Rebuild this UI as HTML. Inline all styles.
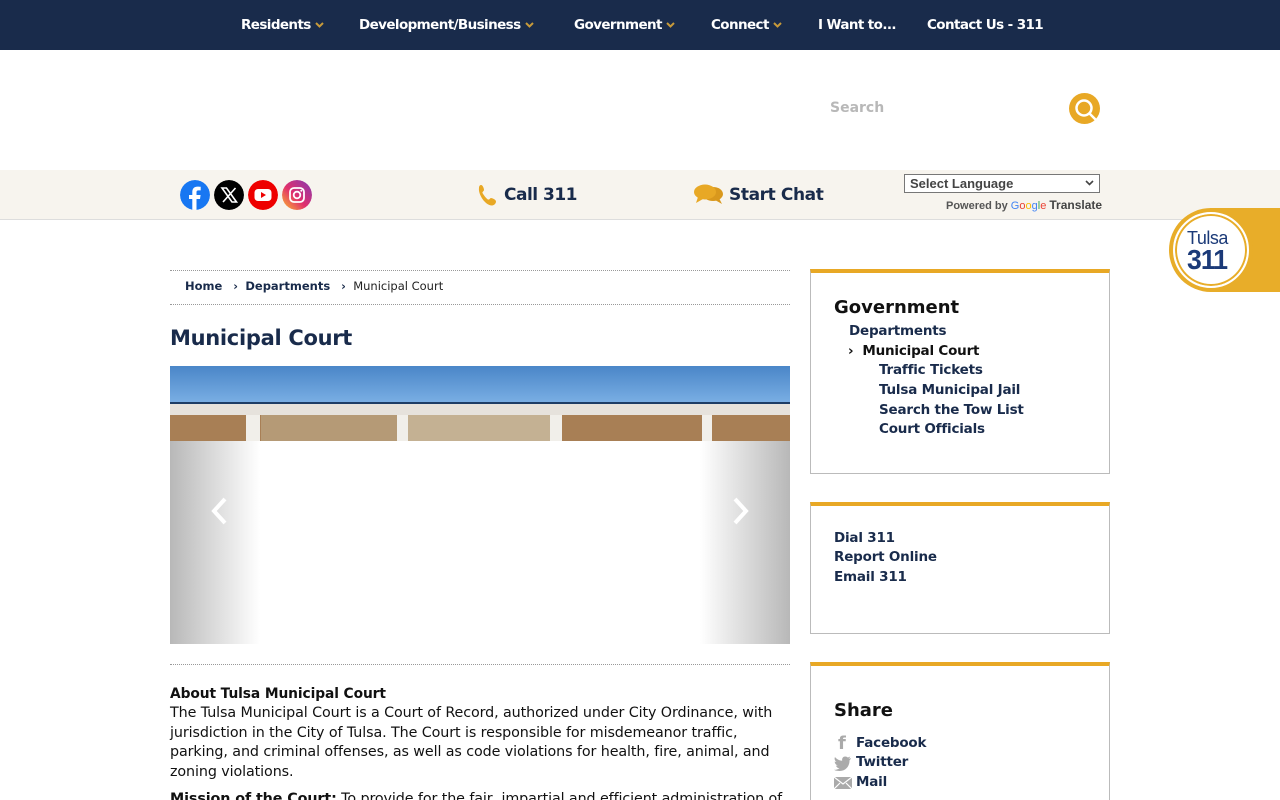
<!DOCTYPE html>
<html><head><meta charset="utf-8"><style>
*{margin:0;padding:0;box-sizing:border-box}
html,body{width:1280px;height:800px;overflow:hidden}
body{background:#fff;font-family:"DejaVu Sans","Liberation Sans",sans-serif;color:#111;position:relative}
.a{position:absolute;white-space:nowrap}
.nav{position:absolute;left:0;top:0;width:1280px;height:50px;background:#192b4b}
.nav span{position:absolute;top:17px;color:#fff;font-weight:bold;font-size:13.5px;letter-spacing:-0.6px}
.nav svg{margin-left:4px;vertical-align:1px}
.bar{position:absolute;left:0;top:170px;width:1280px;height:50px;background:#f7f4ee;border-bottom:1px solid #ddd}
.circ{position:absolute;top:180px;width:30px;height:30px;border-radius:50%}
.navy{color:#192b4b;font-weight:bold}
.box{position:absolute;left:810px;width:300px;border:1px solid #bbb;border-top:4px solid #e8a825}
.side{font-size:13.5px;font-weight:bold;color:#192b4b;letter-spacing:-0.2px}
.body{font-size:14.3px;line-height:19.7px;color:#111;letter-spacing:-0.1px}
</style></head><body>
<div class="nav">
<span style="left:241px">Residents<svg width="9" height="6"><path d="M1 1l3.5 3.5L8 1" stroke="#c79a3a" stroke-width="2" fill="none"/></svg></span>
<span style="left:359px">Development/Business<svg width="9" height="6"><path d="M1 1l3.5 3.5L8 1" stroke="#c79a3a" stroke-width="2" fill="none"/></svg></span>
<span style="left:574px">Government<svg width="9" height="6"><path d="M1 1l3.5 3.5L8 1" stroke="#c79a3a" stroke-width="2" fill="none"/></svg></span>
<span style="left:711px">Connect<svg width="9" height="6"><path d="M1 1l3.5 3.5L8 1" stroke="#c79a3a" stroke-width="2" fill="none"/></svg></span>
<span style="left:818px">I Want to...</span>
<span style="left:927px">Contact Us - 311</span>
</div>
<div class="a" style="left:830px;top:100px;font-size:14px;font-weight:bold;color:#b8b8b8">Search</div>
<svg class="a" style="left:1069px;top:93px" width="31" height="31" viewBox="0 0 31 31"><circle cx="15.5" cy="15.5" r="15.5" fill="#e8a825"/><circle cx="15" cy="15" r="7.5" fill="none" stroke="#fff" stroke-width="2.5"/><circle cx="15" cy="15" r="4" fill="#e8a825"/><path d="M20 20 L27 27" stroke="#fff" stroke-width="2.5"/></svg>
<div class="bar"></div>
<svg class="circ" style="left:180px" viewBox="0 0 30 30"><circle cx="15" cy="15" r="15" fill="#1877f2"/><path d="M16.5 30V19h3.5l.6-4h-4.1v-2.6c0-1.2.4-2 2-2h2.2V6.8c-.4 0-1.7-.2-3.2-.2-3.2 0-5.2 1.9-5.2 5.4V15H9v4h3.3v11z" fill="#fff"/></svg>
<svg class="circ" style="left:214px" viewBox="0 0 30 30"><circle cx="15" cy="15" r="15" fill="#000"/><path d="M8 8h4.5l10 14h-4.5zM21.5 8L9 22" stroke="#fff" stroke-width="1.6" fill="none"/></svg>
<svg class="circ" style="left:248px" viewBox="0 0 30 30"><circle cx="15" cy="15" r="15" fill="#e00"/><rect x="6.5" y="9" width="17" height="12" rx="3.5" fill="#fff"/><path d="M13 12v6l5-3z" fill="#e00"/></svg>
<svg class="circ" style="left:282px" viewBox="0 0 30 30"><defs><linearGradient id="ig" x1="0" y1="1" x2="1" y2="0"><stop offset="0" stop-color="#fdbb2d"/><stop offset=".45" stop-color="#e1306c"/><stop offset="1" stop-color="#833ab4"/></linearGradient></defs><circle cx="15" cy="15" r="15" fill="url(#ig)"/><rect x="8" y="8" width="14" height="14" rx="4" fill="none" stroke="#fff" stroke-width="1.8"/><circle cx="15" cy="15" r="3.3" fill="none" stroke="#fff" stroke-width="1.8"/><circle cx="19.3" cy="10.7" r="1" fill="#fff"/></svg>
<svg class="a" style="left:478px;top:184px" width="20" height="22" viewBox="0 0 20 22"><path d="M3 1c2 0 3 4 3 5s-2 2-1.5 3 4 6 5.5 6.5 2-1.5 3-1.5 5 1.5 5 3.5-2 4-4 4C7 21.5 0 10 1 4 1 2 2 1 3 1z" fill="#e8a825"/></svg>
<div class="a navy" style="left:504px;top:185px;font-size:17px;letter-spacing:-0.5px">Call 311</div>
<svg class="a" style="left:693px;top:184px" width="32" height="22" viewBox="0 0 32 22"><ellipse cx="20" cy="10" rx="10" ry="7" fill="#d9981d"/><path d="M26 14l3 6-7-4z" fill="#d9981d"/><ellipse cx="12" cy="8" rx="11" ry="7.5" fill="#e8a825"/><path d="M5 13l-2 6 7-4z" fill="#e8a825"/></svg>
<div class="a navy" style="left:729px;top:185px;font-size:17px;letter-spacing:-0.4px">Start Chat</div>
<div class="a" style="left:904px;top:174px;width:196px;height:19px;border:1px solid #777;background:#fff;font-family:'Liberation Sans',sans-serif;font-weight:bold;font-size:13px;color:#444;padding:1px 5px">Select Language<svg style="position:absolute;right:5px;top:5px" width="9" height="6"><path d="M1 1l3.5 3.5L8 1" stroke="#444" stroke-width="1.6" fill="none"/></svg></div>
<div class="a" style="left:946px;top:198px;font-family:'Liberation Sans',sans-serif;font-size:11px;color:#555;font-weight:bold">Powered by <span style="color:#4285f4;font-weight:normal">G</span><span style="color:#ea4335;font-weight:normal">o</span><span style="color:#fbbc05;font-weight:normal">o</span><span style="color:#4285f4;font-weight:normal">g</span><span style="color:#34a853;font-weight:normal">l</span><span style="color:#ea4335;font-weight:normal">e</span> <span style="font-size:12px;color:#444">Translate</span></div>
<div class="a" style="left:1210px;top:208px;width:70px;height:84px;background:#e8ad29"></div>
<div class="a" style="left:1169px;top:208px;width:84px;height:84px;border-radius:50%;background:#e8ad29"></div>
<div class="a" style="left:1173px;top:212px;width:76px;height:76px;border-radius:50%;background:#fff;border:2px solid #fff;box-shadow:inset 0 0 0 2px #e8ad29"></div>
<div class="a" style="left:1187px;top:228px;font-family:'Liberation Sans',sans-serif;font-size:18px;color:#1b3a78;letter-spacing:-0.5px">Tulsa</div>
<div class="a" style="left:1187px;top:244px;font-family:'Liberation Sans',sans-serif;font-size:28px;font-weight:bold;color:#1b3a78;letter-spacing:-1px;transform:scaleX(.95);transform-origin:left">311</div>

<div class="a" style="left:170px;top:270px;width:620px;border-top:1px dotted #999"></div>
<div class="a" style="left:170px;top:304px;width:620px;border-top:1px dotted #999"></div>
<div class="a" style="left:185px;top:279px;font-size:11.5px;color:#192b4b"><b>Home</b> &nbsp;&nbsp;<b>›</b>&nbsp; <b>Departments</b> &nbsp;&nbsp;<b>›</b>&nbsp; <span style="color:#222">Municipal Court</span></div>
<div class="a navy" style="left:170px;top:326px;font-size:21px;letter-spacing:-0.3px">Municipal Court</div>
<div class="a" style="left:170px;top:366px;width:620px;height:278px;background:#fff;overflow:hidden">
 <div style="position:absolute;left:0;top:0;width:620px;height:40px;background:linear-gradient(#4a86c8,#7eb2e6)"></div>
 <div style="position:absolute;left:0;top:36px;width:620px;height:2px;background:#1d3d66"></div>
 <div style="position:absolute;left:0;top:38px;width:620px;height:11px;background:#e6e2dc"></div>
 <div style="position:absolute;left:0;top:49px;width:620px;height:26px;background:#a87f55"></div>
 <div style="position:absolute;left:91px;top:49px;width:136px;height:26px;background:#b59a76"></div>
 <div style="position:absolute;left:238px;top:49px;width:142px;height:26px;background:#c4b193"></div>
 <div style="position:absolute;left:76px;top:49px;width:14px;height:26px;background:#f1efea"></div>
 <div style="position:absolute;left:227px;top:49px;width:11px;height:26px;background:#f1efea"></div>
 <div style="position:absolute;left:380px;top:49px;width:12px;height:26px;background:#f1efea"></div>
 <div style="position:absolute;left:532px;top:49px;width:10px;height:26px;background:#f1efea"></div>
 <div style="position:absolute;left:0;top:75px;width:90px;height:203px;background:linear-gradient(90deg,#b8b8b8,rgba(255,255,255,0))"></div>
 <div style="position:absolute;right:0;top:75px;width:90px;height:203px;background:linear-gradient(270deg,#b8b8b8,rgba(255,255,255,0))"></div>
 <svg style="position:absolute;left:38px;top:130px" width="22" height="30"><path d="M17 3L6 15l11 12" stroke="#fff" stroke-width="4" fill="none"/></svg>
 <svg style="position:absolute;left:560px;top:130px" width="22" height="30"><path d="M5 3l11 12-11 12" stroke="#fff" stroke-width="4" fill="none"/></svg>
</div>
<div class="a" style="left:170px;top:664px;width:620px;border-top:1px dotted #999"></div>
<div class="a body" style="left:170px;top:685px;font-weight:bold;font-size:13.8px">About Tulsa Municipal Court</div>
<div class="a body" style="left:170px;top:704px">The Tulsa Municipal Court is a Court of Record, authorized under City Ordinance, with</div>
<div class="a body" style="left:170px;top:724px">jurisdiction in the City of Tulsa. The Court is responsible for misdemeanor traffic,</div>
<div class="a body" style="left:170px;top:743px">parking, and criminal offenses, as well as code violations for health, fire, animal, and</div>
<div class="a body" style="left:170px;top:763px">zoning violations.</div>
<div class="a body" style="left:170px;top:790px"><b>Mission of the Court:</b> To provide for the fair, impartial and efficient administration of</div>

<div class="box" style="top:269px;height:205px"></div>
<div class="a" style="left:834px;top:297px;font-size:18px;font-weight:bold;color:#111">Government</div>
<div class="a side" style="left:849px;top:323px">Departments</div>
<div class="a side" style="left:848px;top:343px;color:#111">›&nbsp; Municipal Court</div>
<div class="a side" style="left:879px;top:362px">Traffic Tickets</div>
<div class="a side" style="left:879px;top:382px">Tulsa Municipal Jail</div>
<div class="a side" style="left:879px;top:402px">Search the Tow List</div>
<div class="a side" style="left:879px;top:421px">Court Officials</div>

<div class="box" style="top:502px;height:132px"></div>
<div class="a side" style="left:834px;top:530px">Dial 311</div>
<div class="a side" style="left:834px;top:549px">Report Online</div>
<div class="a side" style="left:834px;top:569px">Email 311</div>

<div class="box" style="top:662px;height:160px"></div>
<div class="a" style="left:834px;top:700px;font-size:18px;font-weight:bold;color:#111">Share</div>
<div class="a" style="left:838px;top:733px;font-size:18px;font-weight:bold;color:#aaa">f</div>
<svg class="a" style="left:834px;top:756px" width="18" height="15"><path d="M17 2c-1 .5-2 .7-2.5.7 1-.6 1.5-1.4 1.7-2.2-.8.5-1.7.8-2.4 1C12.9.7 11.3.2 9.8.8 8.5 1.5 7.8 3 8.2 4.7 5 4.5 2.5 3 1 1c-1 2 0 4 1.5 5-.6 0-1.3-.2-1.8-.5 0 2 1.4 3.5 3 4-.6.2-1.2.2-1.8.1.5 1.5 2 2.6 3.6 2.7C3.6 13.6 1.8 14 0 13.8 1.8 15 3.6 15 5.7 15 12 15 15.5 9.8 15.5 5V4.4C16.2 3.9 16.7 3 17 2z" fill="#aaa"/></svg>
<svg class="a" style="left:834px;top:777px" width="18" height="12"><rect width="18" height="12" fill="#aaa"/><path d="M0 0l9 7 9-7M0 12l6-6M18 12l-6-6" stroke="#fff" stroke-width="1.2" fill="none"/></svg>
<div class="a side" style="left:856px;top:735px">Facebook</div>
<div class="a side" style="left:856px;top:754px">Twitter</div>
<div class="a side" style="left:856px;top:774px">Mail</div>
</body></html>
